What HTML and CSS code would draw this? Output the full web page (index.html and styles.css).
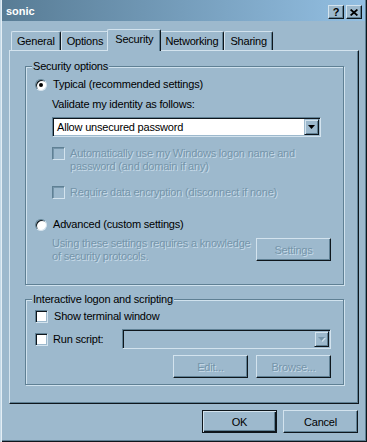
FILE: index.html
```html
<!DOCTYPE html>
<html lang="en">
<head>
    <meta charset="UTF-8">
    <title>sonic Properties</title>
    <link rel="stylesheet" href="styles.css">
</head>
<body>
<div class="window">
    <div class="titlebar">
        <span class="title">sonic</span>
        <div class="caption-btns">
            <span class="cap-btn help">?</span>
            <span class="cap-btn close">
                <svg width="8" height="7" viewBox="0 0 8 7"><path d="M0.6 0.5 L7.4 6.5 M7.4 0.5 L0.6 6.5" stroke="#000" stroke-width="1.7" fill="none"/></svg>
            </span>
        </div>
    </div>

    <div class="tabs">
        <div class="tab">General</div>
        <div class="tab">Options</div>
        <div class="tab active">Security</div>
        <div class="tab">Networking</div>
        <div class="tab">Sharing</div>
    </div>

    <div class="panel">
        <div class="group security">
            <div class="group-title">Security options</div>
            <div class="row opt-typical">
                <span class="radio checked"></span>
                <span class="label">Typical (recommended settings)</span>
            </div>
            <div class="indent">
                <div class="validate">Validate my identity as follows:</div>
                <div class="combo">
                    <span class="combo-text">Allow unsecured password</span>
                    <span class="drop-btn">
                        <svg width="7" height="4" viewBox="0 0 7 4"><path d="M0 0H7L3.5 4Z" fill="#000"/></svg>
                    </span>
                </div>
                <div class="row check-row auto">
                    <span class="check off"></span>
                    <span class="label muted">Automatically use my Windows logon name and<br>password (and domain if any)</span>
                </div>
                <div class="row check-row encrypt">
                    <span class="check off"></span>
                    <span class="label muted">Require data encryption (disconnect if none)</span>
                </div>
            </div>
            <div class="row opt-advanced">
                <span class="radio"></span>
                <span class="label">Advanced (custom settings)</span>
            </div>
            <div class="advanced-desc">
                <div class="muted">Using these settings requires a knowledge<br>of security protocols.</div>
                <button class="btn settings muted" disabled>Settings</button>
            </div>
        </div>

        <div class="group scripting">
            <div class="group-title">Interactive logon and scripting</div>
            <div class="row terminal">
                <span class="check"></span>
                <span class="label">Show terminal window</span>
            </div>
            <div class="row script">
                <span class="check"></span>
                <span class="label script-label">Run script:</span>
                <div class="combo off">
                    <span class="combo-text"></span>
                    <span class="drop-btn">
                        <svg width="8" height="5" viewBox="0 0 8 5"><path d="M1 1H8L4.5 5Z" fill="#d0e2ee"/><path d="M0 0H7L3.5 4Z" fill="#7595aa"/></svg>
                    </span>
                </div>
            </div>
            <div class="script-btns">
                <button class="btn muted" disabled>Edit...</button>
                <button class="btn muted" disabled>Browse...</button>
            </div>
        </div>
    </div>

    <div class="footer">
        <button class="btn default">OK</button>
        <button class="btn">Cancel</button>
    </div>
</div>
</body>
</html>
```

FILE: styles.css
```css
*{
    margin: 0;
    padding: 0;
}
body{
    background-color: #9db9cd;
    font-family: "Liberation Sans", Arial, sans-serif;
    font-size: 11px;
    letter-spacing: -0.2px;
    color: #000;
}
.window{
    width: 367px;
    height: 442px;
    box-sizing: border-box;
    padding: 0 2px 2px 2px;
    background-color: #9db9cd;
    /* frame: light on the left, dark on the right and bottom */
    box-shadow: inset 1px 0 0 #c4d9e7, inset 2px 0 0 #e4eef5,
                inset -1px -1px 0 #0e161c, inset -2px -2px 0 #5f8094;
}

/* title bar */
.titlebar{
    height: 21px;
    display: flex;
    justify-content: space-between;
    align-items: flex-start;
    padding: 0 3px 0 4px;
    background: linear-gradient(to right, #587c95, #93bfe2);
}
.title{
    color: #fff;
    font-weight: bold;
    letter-spacing: 0;
    line-height: 13px;
    padding-top: 5px;
}
.caption-btns{
    display: flex;
    gap: 2px;
    margin-top: 5px;
}
.cap-btn{
    width: 16px;
    height: 14px;
    box-sizing: border-box;
    display: flex;
    align-items: center;
    justify-content: center;
    background-color: #9db9cd;
    border: 1px solid;
    border-color: #d3e3ee #0e161c #0e161c #d3e3ee;
    box-shadow: inset -1px -1px 0 #5f8094;
    font-weight: bold;
    font-size: 11px;
    line-height: 12px;
}

/* tabs */
.tabs{
    display: flex;
    align-items: flex-end;
    height: 21px;
    margin: 8px 6px 0 7px;
    padding-left: 2px;
}
.tab{
    height: 19px;
    box-sizing: border-box;
    padding: 3px 5px 0 5px;
    line-height: 13px;
    border: 1px solid;
    border-bottom: none;
    border-color: #d3e3ee #0e161c #d3e3ee #d3e3ee;
    border-radius: 2px 2px 0 0;
    box-shadow: inset -1px 0 0 #5f8094;
    background-color: #9db9cd;
}
.tab.active{
    height: 22px;
    margin: 0 -2px -1px -2px;
    padding: 3px 7px 0 7px;
    position: relative;
    z-index: 1;
}

/* page */
.panel{
    height: 354px;
    box-sizing: border-box;
    margin: 0 6px 0 7px;
    border: 1px solid;
    border-color: #d3e3ee #0e161c #0e161c #d3e3ee;
    box-shadow: inset -1px -1px 0 #5f8094;
    overflow: hidden;
}
.group{
    width: 319px;
    box-sizing: border-box;
    margin-left: 15px;
    border: 1px solid #5f8094;
    box-shadow: inset 1px 1px 0 #d0e2ee, 1px 1px 0 #d0e2ee;
    padding: 0 12px 0 9px;
}
.group-title{
    width: max-content;
    margin: -7px 0 0 -3px;
    padding: 0 1px;
    line-height: 13px;
    background-color: #9db9cd;
}
.security{
    margin-top: 15px;
    padding-bottom: 21px;
}
.scripting{
    margin-top: 14px;
    padding-bottom: 6px;
}
.row{
    display: flex;
    align-items: center;
    line-height: 13px;
}
.row .label{
    margin-left: 6px;
}
.check-row{
    align-items: flex-start;
}
.check-row .label{
    margin-left: 5px;
}
.opt-typical{
    margin-top: 5px;
}
.indent{
    margin-left: 17px;
}
.validate{
    margin-top: 7px;
    line-height: 13px;
}
.auto{
    margin-top: 10px;
}
.encrypt{
    margin-top: 13px;
}
.opt-advanced{
    margin-top: 19px;
}
.advanced-desc{
    margin: 6px 0 0 17px;
    display: flex;
    justify-content: space-between;
    align-items: flex-start;
    line-height: 13px;
    white-space: nowrap;
}
.settings{
    width: 70px;
    margin-top: 1px;
}
.terminal{
    margin-top: 4px;
}
.script{
    margin-top: 6px;
    height: 20px;
}
.script .label{
    margin-left: 5px;
}
.script-label{
    width: 69px;
}
.script-btns{
    margin-top: 6px;
    display: flex;
    justify-content: flex-end;
    gap: 8px;
}

/* controls */
.muted{
    color: #7595aa;
    text-shadow: 1px 1px 0 #c9dcea;
}
.radio{
    position: relative;
    flex: none;
    width: 12px;
    height: 12px;
    box-sizing: border-box;
    border-radius: 50%;
    background-color: #fff;
    border: 1px solid;
    border-color: #5f8094 #d3e3ee #d3e3ee #5f8094;
    box-shadow: inset 1px 1px 0 #0e161c;
}
.radio.checked::after{
    content: "";
    position: absolute;
    left: 3px;
    top: 3px;
    width: 4px;
    height: 4px;
    border-radius: 50%;
    background-color: #000;
}
.check{
    flex: none;
    width: 13px;
    height: 13px;
    box-sizing: border-box;
    background-color: #fff;
    border: 1px solid;
    border-color: #5f8094 #d3e3ee #d3e3ee #5f8094;
    box-shadow: inset 1px 1px 0 #0e161c, inset -1px -1px 0 #9db9cd;
}
.check.off{
    background-color: #9db9cd;
    box-shadow: inset 1px 1px 0 #7595aa;
}
.combo{
    margin-top: 6px;
    width: 269px;
    height: 20px;
    box-sizing: border-box;
    display: flex;
    align-items: center;
    justify-content: space-between;
    background-color: #fff;
    border: 1px solid;
    border-color: #5f8094 #d3e3ee #d3e3ee #5f8094;
    box-shadow: inset 1px 1px 0 #0e161c, inset -1px -1px 0 #9db9cd;
    padding: 1px;
}
.combo-text{
    padding-left: 3px;
    line-height: 13px;
}
.combo.off{
    margin-top: 0;
    width: 209px;
    background-color: #9db9cd;
}
.drop-btn{
    width: 15px;
    height: 16px;
    box-sizing: border-box;
    display: flex;
    align-items: center;
    justify-content: center;
    background-color: #9db9cd;
    border: 1px solid;
    border-color: #9db9cd #0e161c #0e161c #9db9cd;
    box-shadow: inset 1px 1px 0 #d3e3ee, inset -1px -1px 0 #5f8094;
}
.btn{
    width: 75px;
    height: 23px;
    box-sizing: border-box;
    font-family: "Liberation Sans", Arial, sans-serif;
    font-size: 11px;
    letter-spacing: -0.2px;
    background-color: #9db9cd;
    border: 1px solid;
    border-color: #d3e3ee #0e161c #0e161c #d3e3ee;
    box-shadow: inset -1px -1px 0 #5f8094;
    color: #000;
}
.btn.muted{
    color: #7595aa;
}
.btn.default{
    border: 1px solid #0e161c;
    box-shadow: inset 1px 1px 0 #d3e3ee, inset -1px -1px 0 #0e161c, inset -2px -2px 0 #5f8094;
}
.footer{
    display: flex;
    justify-content: flex-end;
    gap: 6px;
    margin: 6px 7px 0 0;
}
```
